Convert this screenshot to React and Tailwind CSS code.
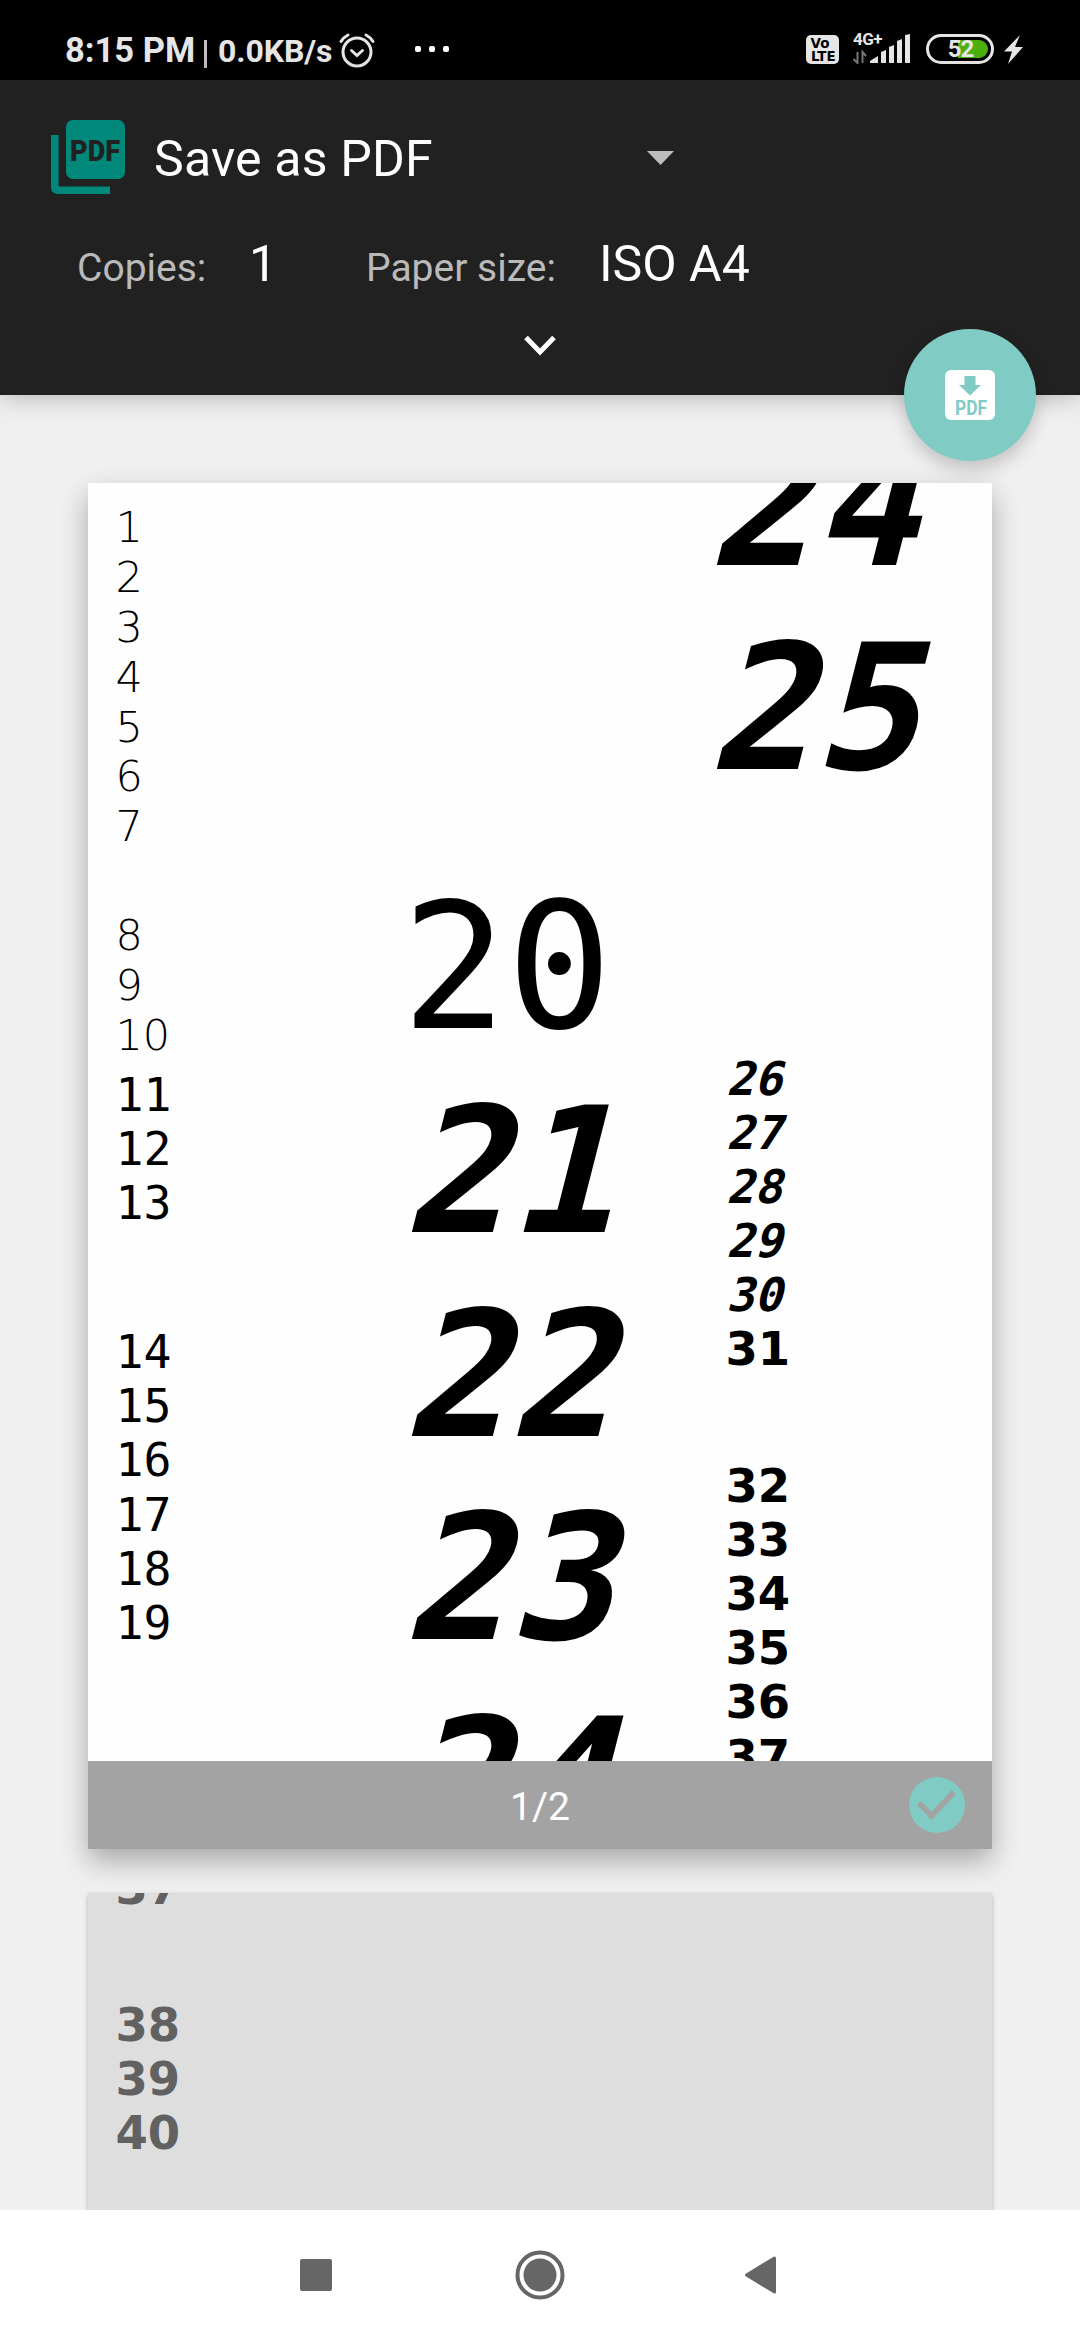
const THIN = "font-['DejaVu_Sans',sans-serif] text-[42.9px] leading-[49.94px] font-extralight";
const MONO = "font-['DejaVu_Sans_Mono',monospace] text-[46.5px] leading-[54.15px]";
const BOLD = "font-['DejaVu_Sans',sans-serif] text-[46.5px] leading-[54.15px] font-bold";
const HUGE = "-ml-[19px] font-['DejaVu_Sans_Mono',monospace] text-[175px] leading-[203.7px]";
const SLANT = "origin-[0_79.7%] -skew-x-[14.3deg]";

function Lines({ from, to, className, lineClass }) {
  const items = [];
  for (let n = from; n <= to; n++) items.push(n);
  return (
    <div className={className}>
      {items.map((n) => (
        <div key={n} className={lineClass}>{n}</div>
      ))}
    </div>
  );
}

function StatusBar() {
  return (
    <div className="flex h-[80px] items-start bg-black pl-[65px] pr-[57px] text-[#e6e6e6]">
      <div className="mt-[29px] w-[129px] text-[34.5px] leading-[42px] font-bold whitespace-nowrap">8:15 PM</div>
      <div className="mt-[40px] ml-[10px] h-[28px] w-[3px] bg-[#c0c0c0]" />
      <div className="mt-[30px] ml-[11px] w-[114px] text-[32px] leading-[42px] font-bold tracking-[-0.1px] whitespace-nowrap">0.0KB/s</div>
      <svg className="mt-[32px] ml-[6px] h-[36px] w-[38px]" viewBox="0 0 38 36" fill="none" stroke="#e6e6e6" strokeWidth="3" strokeLinecap="round">
        <circle cx="19" cy="20" r="14" />
        <path d="M13.5 18.5l5.5 5 5.5-5M3 9.5Q6 5 10 3M35 9.5Q32 5 28 3" />
      </svg>
      <div className="mt-[46px] ml-[39px] flex gap-[8px]">
        <span className="size-[6px] rounded-[2px] bg-white" />
        <span className="size-[6px] rounded-[2px] bg-white" />
        <span className="size-[6px] rounded-[2px] bg-white" />
      </div>
      <svg className="mt-[35px] ml-auto h-[29px] w-[33px] font-['DejaVu_Sans',sans-serif] font-bold" viewBox="0 0 33 29">
        <rect width="33" height="29" rx="5" fill="#e6e6e6" />
        <text x="4.5" y="13" fontSize="13.5" textLength="19" lengthAdjust="spacingAndGlyphs">Vo</text>
        <text x="5" y="25.500" fontSize="13.5" textLength="24.5" lengthAdjust="spacingAndGlyphs">LTE</text>
      </svg>
      <div className="mt-[31px] ml-[14px] flex w-[58px] flex-col">
        <div className="h-[15px] text-[17px] leading-[17px] font-bold tracking-[-0.5px]">4G+</div>
        <svg className="-mt-[12px] h-[30px] w-[58px]" viewBox="0 0 58 30" fill="#e6e6e6">
          <path d="M4.5 18v11L0.5 25M9.500 29V18l3.500 4" fill="none" stroke="#777" strokeWidth="2" />
          <path d="M17 29v-2l8-5v7zM28 29V18l5-2v13zM36 29V13l5-2v18zM44 29V7l5-2v24zM52 29V1l5-1v29z" />
        </svg>
      </div>
      <div className="mt-[34px] ml-[15px] flex h-[30px] w-[68px] items-center justify-end rounded-full border-3 border-[#e6e6e6] pr-[3px]">
        <div className="flex h-[18px] w-[52px] items-center justify-center rounded-r-[9px] bg-[linear-gradient(90deg,transparent_22px,#4caf10_22px)] pr-[3px] text-[24px] leading-[18px] font-bold tracking-[-1px]">52</div>
      </div>
      <svg className="mt-[34px] ml-[10px] h-[30px] w-[19px]" viewBox="0 0 19 30" fill="#e6e6e6">
        <path d="M16 1L0 17.500h8L4 30 19 13h-8z" />
      </svg>
    </div>
  );
}

function PrintOptions() {
  return (
    <header className="relative z-10 h-[315px] bg-[#212121] shadow-[0_2px_24px_rgba(0,0,0,0.25)]">
      <div className="flex h-[154px] items-start pl-[51px] text-white">
        <svg className="mt-[40px] h-[74px] w-[74px]" viewBox="0 0 74 74" fill="#00897b">
          <rect x="15" y="0" width="59" height="59" rx="7" />
          <path d="M0 15h7.500v51.500H59V74H7Q0 74 0 67z" />
          <text x="19" y="40.500" textLength="50" lengthAdjust="spacingAndGlyphs" fill="#212121" className="font-['Roboto',sans-serif] text-[30px] font-black">PDF</text>
        </svg>
        <div className="mt-[49px] ml-[29px] w-[493px] text-[50px] leading-[60px] tracking-[0.2px]">Save as PDF</div>
        <svg className="mt-[71px] h-[14px] w-[27px]" viewBox="0 0 27 14" fill="#bdbdbd">
          <path d="M0 0h27L13.500 14z" />
        </svg>
      </div>
      <div className="flex h-[90px] items-baseline pl-[77px] text-[39px] leading-[60px] text-[#bababa]">
        <span className="w-[172px]">Copies:</span>
        <span className="w-[117px] text-[50px] text-white">1</span>
        <span className="w-[233px]">Paper size:</span>
        <span className="text-[50px] whitespace-nowrap text-white">ISO A4</span>
      </div>
      <svg className="mx-auto mt-[10px] h-[24px] w-[36px]" viewBox="0 0 36 24" fill="none" stroke="#fff" strokeWidth="5">
        <path d="M4 3.500l14 14.500L32 3.500" />
      </svg>
      <button className="absolute top-[249px] left-[904px] flex size-[132px] items-center justify-center rounded-full bg-[#80cbc4] shadow-[0_8px_18px_rgba(0,0,0,0.2)]">
        <svg className="size-[50px]" viewBox="0 0 50 50" fill="#80cbc4">
          <rect width="50" height="50" rx="6" fill="#fff" />
          <path d="M19.500 6h11v9h5.500L25 25.500 14 15h5.500z" />
          <text x="10" y="45" textLength="32" lengthAdjust="spacingAndGlyphs" className="font-['Roboto',sans-serif] text-[20px] font-bold">PDF</text>
        </svg>
      </button>
    </header>
  );
}

function FirstPage() {
  return (
    <section className="relative h-[1366px] w-[904px] bg-[#fefefe] shadow-[0_12px_26px_rgba(0,0,0,0.3)]">
      <div className="grid h-[1278px] grid-cols-[305px_305px_1fr] overflow-hidden pl-[27.5px] text-black">
        <div className="pt-[19.8px]">
          <Lines from={1} to={7} className={THIN} />
          <Lines from={8} to={10} className={"mt-[58.4px] " + THIN} />
          <Lines from={11} to={13} className={"mt-[7.4px] " + MONO} />
          <Lines from={14} to={19} className={"mt-[94.7px] " + MONO} />
        </div>
        <div className="pt-[383.3px]">
          <Lines from={20} to={20} className={HUGE} />
          <Lines from={21} to={24} className={"font-bold " + HUGE} lineClass={SLANT} />
        </div>
        <div>
          <Lines from={24} to={25} className={"-mt-[80.1px] font-bold " + HUGE} lineClass={SLANT} />
          <Lines from={26} to={30} className={"mt-[241.3px] font-bold " + MONO} lineClass={SLANT} />
          <Lines from={31} to={31} className={BOLD} />
          <Lines from={32} to={37} className={"mt-[82.2px] " + BOLD} />
        </div>
      </div>
      <footer className="relative grid h-[88px] grid-cols-[1fr_auto_1fr] items-center bg-[#a3a3a3] text-[39px] leading-[46px] text-white">
        <span />
        <span className="mt-[4px]">1/2</span>
        <svg className="mr-[27px] size-[56px] justify-self-end" viewBox="0 0 56 56">
          <circle cx="28" cy="28" r="28" fill="#80cbc4" />
          <path d="M10 26l12.500 13L45 15" fill="none" stroke="#a3a3a3" strokeWidth="5.5" />
        </svg>
      </footer>
    </section>
  );
}

function SecondPage() {
  return (
    <section className="mt-[44px] h-[317px] w-[904px] overflow-hidden bg-[#dedede] shadow-[0_2px_5px_rgba(0,0,0,0.25)]">
      <div className="-mt-[32.4px] pl-[27.5px] text-[#616161]">
        <Lines from={37} to={37} className={BOLD} />
        <Lines from={38} to={40} className={"mt-[83px] " + BOLD} />
      </div>
    </section>
  );
}

function NavigationBar() {
  return (
    <nav className="relative z-10 flex h-[130px] items-center bg-white pl-[300px]">
      <span className="size-[32px] rounded-[2px] bg-[#666]" />
      <svg className="ml-[183px] size-[50px]" viewBox="0 0 50 50" fill="#666">
        <circle cx="25" cy="25" r="22.5" fill="none" stroke="#666" strokeWidth="4" />
        <circle cx="25" cy="25" r="16.5" />
      </svg>
      <svg className="ml-[180px] h-[38px] w-[31px]" viewBox="0 0 31 38" fill="#666" stroke="#666" strokeWidth="3" strokeLinejoin="round">
        <path d="M29.500 2v34L1.500 19z" />
      </svg>
    </nav>
  );
}

export default function App() {
  return (
    <div className="h-[2340px] w-[1080px] overflow-hidden bg-[#f0f0f0] font-['Roboto',sans-serif]">
      <StatusBar />
      <PrintOptions />
      <main className="h-[1815px] overflow-hidden pt-[88px] pl-[88px]">
        <FirstPage />
        <SecondPage />
      </main>
      <NavigationBar />
    </div>
  );
}
